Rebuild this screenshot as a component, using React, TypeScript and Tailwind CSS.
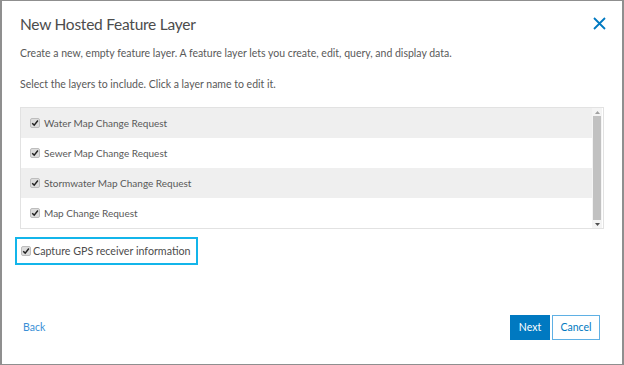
import React from "react";

const Check = ({ size = 10 }: { size?: number }) => (
  <span
    className="inline-flex items-center justify-center rounded-[2px] bg-[#dcdcdc] border border-[#bdbdbd] shrink-0"
    style={{ width: size, height: size }}
  >
    <svg viewBox="0 0 10 10" width={size - 2} height={size - 2}>
      <path d="M1.5 5.2 L4 7.6 L8.6 1.8" fill="none" stroke="#222" strokeWidth="1.8" />
    </svg>
  </span>
);

const rows = [
  "Water Map Change Request",
  "Sewer Map Change Request",
  "Stormwater Map Change Request",
  "Map Change Request",
];

export default function App() {
  return (
    <div
      className="w-[624px] h-[365px] bg-white border-l-2 border-r-2 border-t border-b border-[#8f8f8f] relative overflow-hidden"
      style={{ fontFamily: "Lato, 'Noto Sans', sans-serif" }}
    >
      <div className="flex items-start justify-between pl-[18px] pr-[16px] pt-[12px]">
        <h1 className="text-[15.5px] leading-[22px] tracking-[-0.25px] text-[#4c4c4c]">New Hosted Feature Layer</h1>
        <svg width="13" height="13" viewBox="0 0 13 13" className="mt-[4px]">
          <path d="M1 1 L12 12 M12 1 L1 12" stroke="#0079c1" strokeWidth="1.8" />
        </svg>
      </div>
      <p className="pl-[18px] mt-[10px] text-[10.5px] leading-[16px] text-[#595959]">
        Create a new, empty feature layer. A feature layer lets you create, edit, query, and display data.
      </p>
      <p className="pl-[18px] mt-[15px] text-[10.5px] leading-[16px] text-[#595959]">
        Select the layers to include. Click a layer name to edit it.
      </p>
      <div className="ml-[18px] mt-[15px] w-[584px] h-[122px] border border-[#e2e2e2] flex">
        <div className="flex-1 flex flex-col">
          {rows.map((r, i) => (
            <div
              key={r}
              className={`h-[30px] flex items-center gap-[4px] pl-[9px] text-[10px] text-[#595959] ${
                i % 2 === 0 ? "bg-[#efefef]" : "bg-white"
              }`}
            >
              <Check />
              <span>{r}</span>
            </div>
          ))}
        </div>
        <div className="w-[10px] mr-[1px] flex flex-col items-center bg-[#f4f4f4]">
          <div className="h-[8px] flex items-center">
            <svg width="5" height="3" viewBox="0 0 5 3">
              <path d="M0 3 L2.5 0 L5 3 Z" fill="#a0a0a0" />
            </svg>
          </div>
          <div className="flex-1 w-[8px] bg-[#c1c1c1]" />
          <div className="h-[8px] flex items-center">
            <svg width="5" height="3" viewBox="0 0 5 3">
              <path d="M0 0 L2.5 3 L5 0 Z" fill="#505050" />
            </svg>
          </div>
        </div>
      </div>
      <div className="ml-[13px] mt-[8px] w-[183px] h-[28px] border-2 border-[#13b5ea] flex items-center gap-[2px] pl-[4px]">
        <Check size={10} />
        <span className="text-[10.7px] whitespace-nowrap text-[#4c4c4c]">Capture GPS receiver information</span>
      </div>
      <div className="absolute left-[21px] right-[22px] bottom-[24px] flex items-center justify-between">
        <span className="text-[10.5px] text-[#3a8fd6]">Back</span>
        <div className="flex gap-[2px]">
          <button className="w-[40px] h-[25px] bg-[#0079c1] text-white text-[10.5px] border border-[#0079c1]">Next</button>
          <button className="w-[48px] h-[25px] bg-white text-[#0079c1] text-[10.5px] border border-[#5fb0e4]">Cancel</button>
        </div>
      </div>
    </div>
  );
}
